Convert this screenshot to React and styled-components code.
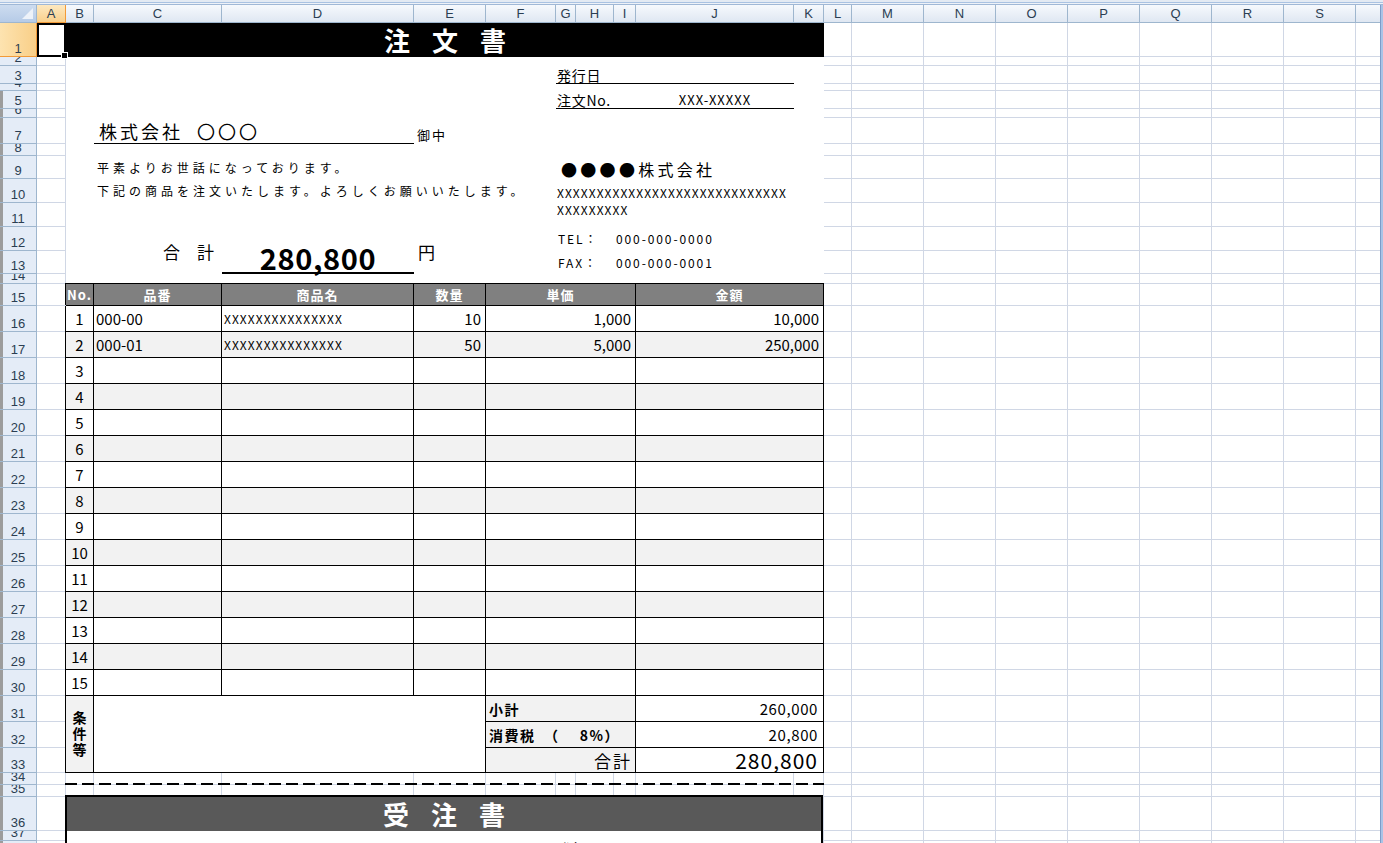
import React from 'react';
import styled, { createGlobalStyle, css } from 'styled-components';

const COLS = 'ABCDEFGHIJKLMNOPQRST'.split('');
const COL_W = [29, 28, 128, 192, 72, 70, 20, 38, 22, 158, 30, 28, 72, 72, 72, 72, 72, 72, 72, 72];
const ROW_H = [
  34, 9, 18, 7, 18, 9, 26, 12, 23, 24, 24, 24, 23, 10, 22,
  ...Array(15).fill(26),
  26, 26, 25, 12, 12, 34, 10, 16,
];

const JP = `"Noto Sans CJK JP", "Noto Sans", sans-serif`;
const UI = `"Liberation Sans", Arial, sans-serif`;

const GlobalStyle = createGlobalStyle`
  *, *::before, *::after { box-sizing: border-box; }
  html, body { margin: 0; padding: 0; background: #fff; overflow: hidden; }
  #root { width: 1383px; height: 843px; overflow: hidden; }
`;

const sheetTracks = css`
  display: grid;
  grid-template-columns: 37px ${COL_W.map((w) => `${w}px`).join(' ')};
  grid-template-rows: 18px ${ROW_H.map((h) => `${h}px`).join(' ')};
`;

const cellRef = (s) => {
  const m = /^([A-Z])(\d+)$/.exec(s);
  return { col: COLS.indexOf(m[1]) + 2, row: Number(m[2]) + 1 };
};

const at = ({ $at }) => {
  const [a, b = a] = $at.split(':');
  const s = cellRef(a);
  const e = cellRef(b);
  return css`
    grid-column: ${s.col} / ${e.col + 1};
    grid-row: ${s.row} / ${e.row + 1};
  `;
};

/* ---------- window chrome ---------- */
const Window = styled.div`
  width: 1383px;
  height: 843px;
  display: flex;
  flex-direction: column;
  background: #fff;
  overflow: hidden;
`;

const FormulaEdge = styled.div`
  flex: none;
  height: 5px;
  background: linear-gradient(
    to bottom,
    #e3eaf3 0 2px,
    #a9c2e2 2px 3px,
    #eef2f8 3px 4px,
    #a0b8d6 4px 5px
  );
`;

const Workspace = styled.div`
  flex: 1;
  display: flex;
  min-height: 0;
`;

const Stack = styled.div`
  width: 1380px;
  height: 838px;
  display: grid;
  overflow: hidden;
  & > * {
    grid-area: 1 / 1;
  }
`;

const ScrollEdge = styled.div`
  width: 3px;
  flex: none;
  background: #a9c3e6;
  border-left: 1px solid #7d9cc8;
`;

/* ---------- sheet grid ---------- */
const GridLayer = styled.div`
  ${sheetTracks};
  align-self: start;
`;

const DocLayer = styled.div`
  ${sheetTracks};
  align-self: start;
`;

const Corner = styled.div`
  position: relative;
  background: linear-gradient(#cddcef, #b6cbe7);
  border-right: 1px solid #9eb6ce;
  border-bottom: 1px solid #9eb6ce;
  &::after {
    content: '';
    position: absolute;
    right: 3px;
    bottom: 3px;
    width: 11px;
    height: 11px;
    background: #edf2f9;
    clip-path: polygon(100% 0, 100% 100%, 0 100%);
  }
`;

const ColHead = styled.div`
  display: flex;
  align-items: center;
  justify-content: center;
  font: 13px/1 ${UI};
  color: #2b3e52;
  border-right: 1px solid #9eb6ce;
  border-bottom: 1px solid #9eb6ce;
  background: linear-gradient(#f6f9fd, #dfe7f2);
  ${(p) =>
    p.$sel &&
    css`
      background: linear-gradient(#fde8c0, #f9d08c);
      border-right-color: #f29a38;
      border-bottom-color: #f29a38;
      box-shadow: -1px 0 0 #f29a38;
    `}
`;

const RowHead = styled.div`
  display: flex;
  align-items: flex-end;
  justify-content: center;
  overflow: hidden;
  padding-bottom: 1px;
  font: 13px/1 ${UI};
  color: #2b3e52;
  background: #e4ecf7;
  border-right: 1px solid #9eb6ce;
  border-bottom: 1px solid #9eb6ce;
  ${(p) => p.$edge && css`box-shadow: inset 3px 0 0 #9c9c9c;`}
  ${(p) =>
    p.$sel &&
    css`
      background: linear-gradient(90deg, #fde3b0, #f9cf88);
      border-right-color: #f29a38;
      border-bottom-color: #f29a38;
    `}
`;

const GridCell = styled.div`
  background: #fff;
  border-right: 1px solid #d0d7e5;
  border-bottom: 1px solid #d0d7e5;
`;

const ActiveCell = styled.div`
  ${at};
  position: relative;
  background: #fff;
  border: 2px solid #000;
`;

const FillHandle = styled.span`
  position: absolute;
  right: -4px;
  bottom: -4px;
  width: 7px;
  height: 7px;
  background: #000;
  border: 1px solid #fff;
`;

/* ---------- order sheet ---------- */
const titleText = css`
  display: flex;
  align-items: center;
  justify-content: center;
  color: #fff;
  font: 700 26px/1 ${JP};
  letter-spacing: 22px;
  padding-left: 22px;
`;

const TitleBar = styled.div`
  ${at};
  ${titleText};
  background: #000;
`;

const Paper = styled.div`
  ${at};
  background: #fff;
`;

const RuleLine = styled.div`
  ${at};
  border-bottom: ${(p) => p.$weight || 1}px solid #000;
`;

const FieldLabel = styled.div`
  ${at};
  display: flex;
  align-items: flex-end;
  padding: 0 0 2px 1px;
  font: 14px/1 ${JP};
  letter-spacing: 0.7px;
  white-space: nowrap;
  color: #000;
`;

const FieldValue = styled.div`
  ${at};
  display: flex;
  align-items: flex-end;
  justify-content: center;
  padding-bottom: 3px;
  font: 13px/1 ${JP};
  letter-spacing: 1px;
  white-space: nowrap;
`;

const Addressee = styled.div`
  ${at};
  display: flex;
  align-items: flex-end;
  padding: 0 0 4px 5px;
  font: 18px/1 ${JP};
  letter-spacing: 3px;
  white-space: pre;
`;

const Honorific = styled.div`
  ${at};
  display: flex;
  align-items: flex-end;
  padding: 0 0 3px 3px;
  font: 13px/1 ${JP};
  letter-spacing: 2px;
  white-space: nowrap;
`;

const Greeting = styled.div`
  ${at};
  display: flex;
  align-items: center;
  padding-left: 3px;
  font: 12px/1 ${JP};
  letter-spacing: 4px;
  white-space: nowrap;
`;

const Sender = styled.div`
  ${at};
  display: flex;
  align-items: flex-end;
  padding: 0 0 2px 5px;
  font: 16px/1 ${JP};
  letter-spacing: 3.3px;
  white-space: nowrap;
`;

const Address = styled.div`
  ${at};
  padding: 5px 0 0 1px;
  font: 12px/17px ${JP};
  letter-spacing: 1.05px;
  white-space: nowrap;
`;

const Contact = styled.div`
  ${at};
  display: flex;
  align-items: center;
  padding-left: 2px;
  font: 12px/1 ${JP};
  letter-spacing: 1.9px;
  white-space: nowrap;
`;

const TotalCaption = styled.div`
  ${at};
  display: flex;
  align-items: center;
  justify-content: flex-end;
  padding: 2px 8px 0 0;
  font: 17px/1 ${JP};
  white-space: pre;
`;

const TotalFigure = styled.div`
  ${at};
  display: flex;
  align-items: flex-end;
  justify-content: center;
  border-bottom: 2px solid #000;
  font: 700 29px/1 ${JP};
  letter-spacing: 0.6px;
`;

const Yen = styled.div`
  ${at};
  display: flex;
  align-items: center;
  padding: 2px 0 0 4px;
  font: 17px/1 ${JP};
`;

/* ---------- item table ---------- */
const TABLE_COLS = '28px 128px 192px 72px 150px 188px';

const TableRow = styled.div`
  ${at};
  display: grid;
  grid-template-columns: ${TABLE_COLS};
  background: ${(p) => (p.$head ? '#808080' : p.$shade ? '#f2f2f2' : '#fff')};
  box-shadow: ${(p) => (p.$head ? '-1px -1px 0 #000, 0 -1px 0 #000' : '-1px 0 0 #000')};
`;

const HeadCell = styled.div`
  display: flex;
  align-items: center;
  justify-content: ${(p) => (p.$left ? 'flex-start' : 'center')};
  padding-left: ${(p) => (p.$left ? '1px' : '0')};
  border-right: 1px solid #000;
  border-bottom: 1px solid #000;
  color: #fff;
  font: 700 13px/1 ${JP};
  letter-spacing: 1px;
  white-space: nowrap;
`;

const justify = { left: 'flex-start', center: 'center', right: 'flex-end' };

const BodyCell = styled.div`
  display: flex;
  align-items: center;
  justify-content: ${(p) => justify[p.$align]};
  padding: 0 ${(p) => (p.$align === 'right' ? '4px' : '0')} 0
    ${(p) => (p.$align === 'left' ? '2px' : '0')};
  border-right: 1px solid #000;
  border-bottom: 1px solid #000;
  font: ${(p) => (p.$fine ? '12px' : '15px')}/1 ${JP};
  letter-spacing: ${(p) => (p.$fine ? '1.05px' : '0')};
  white-space: nowrap;
  overflow: hidden;
`;

const SummaryBlock = styled.div`
  ${at};
  display: grid;
  grid-template-columns: ${TABLE_COLS};
  grid-template-rows: 26px 26px 25px;
  box-shadow: -1px 0 0 #000;
  background: #fff;
`;

const NoteLabel = styled.div`
  grid-column: 1;
  grid-row: 1 / 4;
  display: flex;
  flex-direction: column;
  align-items: center;
  justify-content: center;
  padding-bottom: 2px;
  background: #f2f2f2;
  border-right: 1px solid #000;
  border-bottom: 1px solid #000;
  font: 700 14px/16px ${JP};
`;

const NoteArea = styled.div`
  grid-column: 2 / 5;
  grid-row: 1 / 4;
  border-right: 1px solid #000;
  border-bottom: 1px solid #000;
`;

const SumLabel = styled.div`
  display: flex;
  align-items: center;
  justify-content: ${(p) => (p.$right ? 'flex-end' : 'flex-start')};
  padding: 0 ${(p) => (p.$right ? '3px' : '0')} 0 ${(p) => (p.$right ? '0' : '3px')};
  background: #f2f2f2;
  border-right: 1px solid #000;
  border-bottom: 1px solid #000;
  font: ${(p) => (p.$right ? '400 17px' : '700 14px')}/1 ${JP};
  letter-spacing: ${(p) => (p.$right ? '2px' : '1.5px')};
  white-space: pre;
`;

const SumValue = styled.div`
  display: flex;
  align-items: center;
  justify-content: flex-end;
  padding-right: 5px;
  border-right: 1px solid #000;
  border-bottom: 1px solid #000;
  font: ${(p) => (p.$big ? '21px' : '15px')}/1 ${JP};
  letter-spacing: ${(p) => (p.$big ? '1px' : '0.6px')};
`;

const CutLine = styled.div`
  ${at};
  align-self: end;
  height: 2px;
  margin-left: -1px;
  background: repeating-linear-gradient(to right, #000 0 12px, transparent 12px 17px);
`;

const ReceiptBox = styled.div`
  ${at};
  display: flex;
  flex-direction: column;
  margin: -2px 1px 0 -1px;
  border: 2px solid #000;
  border-bottom: none;
  background: #fff;
  overflow: hidden;
`;

const ReceiptTitle = styled.div`
  ${titleText};
  flex: none;
  height: 34px;
  background: #595959;
`;

const ROWS = [
  ['000-00', 'XXXXXXXXXXXXXXX', '10', '1,000', '10,000'],
  ['000-01', 'XXXXXXXXXXXXXXX', '50', '5,000', '250,000'],
];

export default function App() {
  const body = Array.from({ length: 15 }, (_, i) => {
    const r = 16 + i;
    const d = ROWS[i] || ['', '', '', '', ''];
    return (
      <TableRow key={r} $at={`B${r}:K${r}`} $shade={i % 2 === 1}>
        <BodyCell $align="center">{i + 1}</BodyCell>
        <BodyCell $align="left">{d[0]}</BodyCell>
        <BodyCell $align="left" $fine>
          {d[1]}
        </BodyCell>
        <BodyCell $align="right">{d[2]}</BodyCell>
        <BodyCell $align="right">{d[3]}</BodyCell>
        <BodyCell $align="right">{d[4]}</BodyCell>
      </TableRow>
    );
  });

  return (
    <>
      <GlobalStyle />
      <Window>
        <FormulaEdge />
        <Workspace>
          <Stack>
            <GridLayer>
              <Corner />
              {COLS.map((c) => (
                <ColHead key={c} $sel={c === 'A'}>
                  {c === 'T' ? '' : c}
                </ColHead>
              ))}
              {ROW_H.map((_, i) => (
                <React.Fragment key={i}>
                  <RowHead $sel={i === 0} $edge={i >= 4}>
                    {i + 1}
                  </RowHead>
                  {COLS.map((c) => (
                    <GridCell key={c} />
                  ))}
                </React.Fragment>
              ))}
            </GridLayer>

            <DocLayer>
              <TitleBar $at="B1:K1">注文書</TitleBar>
              <Paper $at="B2:K14" />

              <RuleLine $at="G3:J3" />
              <FieldLabel $at="G3:J3">発行日</FieldLabel>
              <RuleLine $at="G5:J5" />
              <FieldLabel $at="G5:I5">注文No.</FieldLabel>
              <FieldValue $at="J5">XXX-XXXXX</FieldValue>

              <RuleLine $at="C7:D7" />
              <Addressee $at="C7:D7">株式会社  〇〇〇</Addressee>
              <Honorific $at="E7">御中</Honorific>

              <Greeting $at="C9:F9">平素よりお世話になっております。</Greeting>
              <Greeting $at="C10:F10">下記の商品を注文いたします。よろしくお願いいたします。</Greeting>

              <Sender $at="G9:J9">●●●●株式会社</Sender>
              <Address $at="G10:J11">
                XXXXXXXXXXXXXXXXXXXXXXXXXXXXX
                <br />
                XXXXXXXXX
              </Address>
              <Contact $at="G12:H12">TEL：</Contact>
              <Contact $at="I12:J12">000-000-0000</Contact>
              <Contact $at="G13:H13">FAX：</Contact>
              <Contact $at="I13:J13">000-000-0001</Contact>

              <TotalCaption $at="C12:C13">合　計</TotalCaption>
              <TotalFigure $at="D12:D13">280,800</TotalFigure>
              <Yen $at="E12:E13">円</Yen>

              <TableRow $at="B15:K15" $head>
                <HeadCell $left>No.</HeadCell>
                <HeadCell>品番</HeadCell>
                <HeadCell>商品名</HeadCell>
                <HeadCell>数量</HeadCell>
                <HeadCell>単価</HeadCell>
                <HeadCell>金額</HeadCell>
              </TableRow>
              {body}

              <SummaryBlock $at="B31:K33">
                <NoteLabel>
                  <span>条</span>
                  <span>件</span>
                  <span>等</span>
                </NoteLabel>
                <NoteArea />
                <SumLabel>小計</SumLabel>
                <SumValue>260,000</SumValue>
                <SumLabel>{'消費税　（　 8%）'}</SumLabel>
                <SumValue>20,800</SumValue>
                <SumLabel $right>合計</SumLabel>
                <SumValue $big>280,800</SumValue>
              </SummaryBlock>

              <CutLine $at="B34:K34" />

              <ReceiptBox $at="B36:K38">
                <ReceiptTitle>受注書</ReceiptTitle>
              </ReceiptBox>
              <FieldLabel $at="G38:J38">発行日</FieldLabel>

              <ActiveCell $at="A1">
                <FillHandle />
              </ActiveCell>
            </DocLayer>
          </Stack>
          <ScrollEdge />
        </Workspace>
      </Window>
    </>
  );
}
